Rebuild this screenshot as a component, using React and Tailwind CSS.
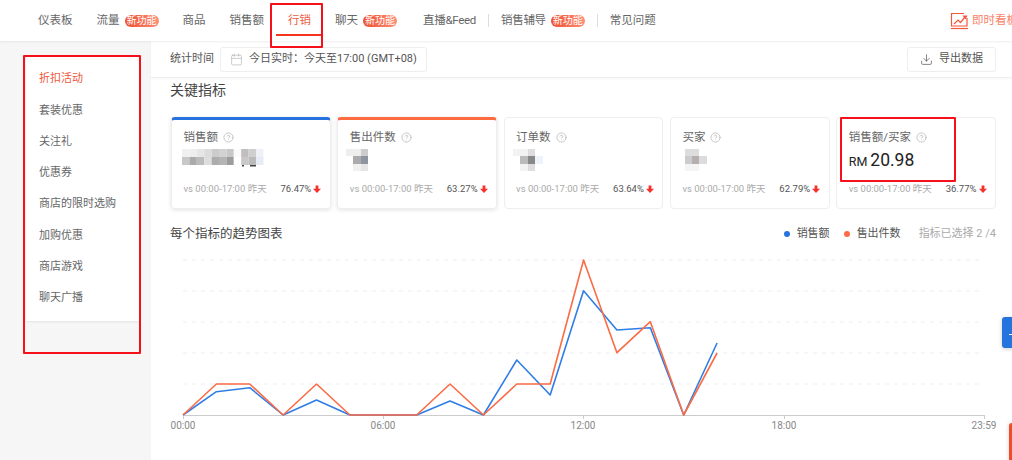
import { Calendar, CircleHelp, Download } from 'lucide-react';

const FONT = 'font-["Roboto","Noto_Sans_CJK_SC",sans-serif]';

const NAV = [
    { label: '仪表板' },
    { label: '流量', badge: true },
    { label: '商品' },
    { label: '销售额' },
    { label: '行销', active: true },
    { label: '聊天', badge: true },
    { label: '直播&Feed', divider: true, tight: true, shift: true },
    { label: '销售辅导', badge: true, divider: true, tight: true },
    { label: '常见问题' },
];

const SIDE = ['折扣活动', '套装优惠', '关注礼', '优惠券', '商店的限时选购', '加购优惠', '商店游戏', '聊天广播'];

const row1 = ['#f0f0f0', '#eeeeee', '#e6e6e6', '#dcdcdc', '#cccccc', '#d2d2d2', '#c8c8c8', '#fafafa', '#c2bebe', '#cfcfcf', '#eef1f6'];
const row2 = ['#c8c8c8', '#ababab', '#bcbcbc', '#dedede', '#adadad', '#b4b4b4', '#9c9c9c', '#ffffff', '#c8c8c8', '#bbbbbb', '#e6ebf5'];

// pixelated values: [x, y, w, h, colour]
const MOSAICS = [
    [
        ...row1.map((c, i) => [i * 7.4, 0, 7.4, 8, c]),
        ...row2.map((c, i) => [i * 7.4, 8, 7.4, 8, c]),
        [60, 16, 2, 1.5, '#444'], [68, 16, 6, 1.5, '#444'],
    ],
    [
        [7, 0, 15, 7, '#eeeeee'], [22, 0, 7, 7, '#cdcdcd'],
        [14, 7, 8, 8, '#ababab'], [22, 7, 7, 8, '#8f95a0'],
        [14, 15, 8, 7, '#f0f0f0'], [22, 15, 7, 7, '#e5e5e5'],
    ],
    [
        [7, 0, 15, 7, '#f3f3f3'], [22, 0, 7, 7, '#dddddd'],
        [14, 7, 8, 8, '#bbbbbb'], [22, 7, 7, 8, '#888888'], [29, 7, 8, 8, '#eef2fa'],
        [14, 15, 8, 7, '#f3f3f3'], [22, 15, 7, 7, '#dddddd'],
    ],
    [
        [13, 0, 14, 7, '#dddddd'],
        [13, 7, 7, 8, '#cccccc'], [20, 7, 7, 8, '#b5b0ae'], [27, 7, 8, 8, '#dcdce0'],
        [13, 15, 14, 7, '#f4f4f4'],
    ],
];

const CARDS = [
    { title: '销售额', pct: '76.47%', top: 'border-t-[#2673dd]', mosaic: 0 },
    { title: '售出件数', pct: '63.27%', top: 'border-t-[#ff6b40]', mosaic: 1 },
    { title: '订单数', pct: '63.64%', mosaic: 2 },
    { title: '买家', pct: '62.79%', mosaic: 3 },
    { title: '销售额/买家', pct: '36.77%', value: '20.98' },
];

const hourX = (h) => 183 + h * 33.38;
const BLUE = [415, 391.7, 387.7, 415, 400, 415, 415, 415, 401, 415, 360, 395, 290.7, 330, 327.7, 415, 343];
const ORANGE = [415, 384, 384, 415, 384, 415, 415, 415, 384, 415, 384, 384, 260, 352.7, 321.7, 415, 353];
const toPoints = (list) => list.map((y, h) => `${hourX(h)},${y}`).join(' ');

function Badge() {
    return (
        <span className="ml-[5px] flex h-[12px] w-[34px] items-center justify-center rounded-full bg-gradient-to-r from-[#ee4d2d] to-[#ff8f75] text-[10px] leading-none text-white">
            新功能
        </span>
    );
}

function Mosaic({ cells, wide }) {
    return (
        <svg width={wide ? 84 : 40} height="24" className={`mt-[2px] blur-[0.6px] ${wide ? '-ml-[1.5px]' : '-ml-[10.5px]'}`}>
            {cells.map(([x, y, w, h, c], i) => (
                <rect key={i} x={x} y={y} width={w} height={h} fill={c} />
            ))}
        </svg>
    );
}

function DownArrow() {
    return (
        <svg width="8" height="8" viewBox="0 0 8 8" className="ml-[2px]">
            <path d="M2.6 0.5h2.8v3.2H8L4 8 0 3.7h2.6z" fill="#f6302a" />
        </svg>
    );
}

function Card({ card }) {
    return (
        <div
            className={`h-[92px] rounded-[4px] border border-[#eeeeee] pl-[11.5px] pr-[8.5px] ${
                card.top ? `border-t-[3px] pt-[8px] shadow-[0_1px_4px_rgba(0,0,0,0.12)] ${card.top}` : 'pt-[10px]'
            }`}
        >
            <div className="flex h-[19px] items-center text-[11.5px] text-[#666666]">
                {card.title}
                <CircleHelp size={11} strokeWidth={1.4} className="ml-[5px] text-[#aaaaaa]" />
            </div>
            <div className="flex h-[24px] items-start">
                {card.value ? (
                    <div className="mt-[2px] flex items-baseline text-[#222222]">
                        <span className="text-[12.5px]">RM</span>
                        <span className="ml-[3px] text-[17.5px] leading-[22px]">{card.value}</span>
                    </div>
                ) : (
                    <Mosaic cells={MOSAICS[card.mosaic]} wide={card.mosaic === 0} />
                )}
            </div>
            <div className="mt-[10px] flex items-center justify-between">
                <span className="text-[9.5px] text-[#aaaaaa]">vs 00:00-17:00 昨天</span>
                <span className="mt-[1px] flex items-center text-[9.5px] text-[#555555]">
                    {card.pct}
                    <DownArrow />
                </span>
            </div>
        </div>
    );
}

function TrendChart() {
    return (
        <svg viewBox="171 250 825 190" width="825" height="190" className="mt-[7px] block overflow-visible">
            {[260, 291, 322, 353, 384].map((y) => (
                <line key={y} x1="183" x2="981" y1={y} y2={y} stroke="#eeeeee" strokeDasharray="4 5" />
            ))}
            <line x1="183" x2="984" y1="415.5" y2="415.5" stroke="#cccccc" />
            {[183, 383, 583, 784, 984].map((x) => (
                <line key={x} x1={x + 0.5} x2={x + 0.5} y1="415" y2="419" stroke="#cccccc" />
            ))}
            {[[183, '00:00'], [383, '06:00'], [583, '12:00'], [784, '18:00'], [984, '23:59']].map(([x, t]) => (
                <text key={t} x={x} y="429" textAnchor="middle" fontSize="10" fill="#888888">{t}</text>
            ))}
            <polyline points={toPoints(BLUE)} fill="none" stroke="#2f7ee6" strokeWidth="1.6" strokeLinejoin="round" />
            <polyline points={toPoints(ORANGE)} fill="none" stroke="#fb6b45" strokeWidth="1.6" strokeLinejoin="round" />
        </svg>
    );
}

export default function App() {
    return (
        <div className={`relative h-[460px] w-[1012px] overflow-hidden bg-white ${FONT}`}>
            {/* top nav */}
            <div className="relative z-10 flex h-[41px] items-center pl-[38px] text-[11.5px] text-[#666666] shadow-[0_1px_2px_rgba(0,0,0,0.07)]">
                {NAV.map((item) => (
                    <div key={item.label} className={`mr-[24px] flex items-center ${item.shift ? 'ml-[2px]' : ''}`}>
                        <span className={`relative ${item.active ? 'text-[#ee5a3c]' : ''} ${item.tight ? 'tracking-[-0.3px]' : ''}`}>
                            {item.label}
                            {item.active && (
                                <span className="absolute left-[-12px] right-[-11px] top-[22px] h-[2px] bg-[#f5331f]" />
                            )}
                        </span>
                        {item.badge && <Badge />}
                        {item.divider && <span className="ml-[12px] mr-[-12px] h-[13px] w-px bg-[#dddddd]" />}
                    </div>
                ))}
                <div className="ml-auto flex w-[62px] shrink-0 items-center text-[#f8836a]">
                    <svg width="19" height="18" viewBox="0 0 19 18" fill="none" stroke="#f0593a" strokeWidth="1.2" className="shrink-0">
                        <path d="M17 6v8H1.5V1.5H14" />
                        <path d="M1 16.5h17" />
                        <path d="M4 12l4-4 2.5 2.5L15 5" />
                        <path d="M12.5 3.5h5l-2 4z" fill="#f0593a" stroke="none" />
                    </svg>
                    <span className="ml-[3px] whitespace-nowrap">即时看板</span>
                </div>
            </div>

            <div className="flex h-[419px]">
                {/* side menu */}
                <div className="w-[151px] shrink-0 bg-[#f6f6f6] pl-[26px] pt-[14px]">
                    <div className="h-[266px] w-[113px] bg-white pl-[13px] pt-[9px] shadow-[0_1px_2px_rgba(0,0,0,0.08)]">
                        {SIDE.map((s, i) => (
                            <div
                                key={s}
                                className={`flex h-[31.25px] items-center whitespace-nowrap text-[11px] ${
                                    i === 0 ? 'text-[#ee5a3c]' : 'text-[#666666]'
                                }`}
                            >
                                {s}
                            </div>
                        ))}
                    </div>
                </div>

                <div className="min-w-0 flex-1">
                    {/* toolbar */}
                    <div className="flex h-[37px] items-center border-b border-[#eeeeee] pl-[19px] pr-[16px] shadow-[0_1px_2px_rgba(0,0,0,0.04)]">
                        <span className="text-[11px] text-[#555555]">统计时间</span>
                        <div className="ml-[6px] flex h-[25px] w-[207px] items-center rounded-[3px] border border-[#eeeeee] pl-[9px] text-[11px] text-[#555555]">
                            <Calendar size={13} strokeWidth={1.1} className="text-[#aaaaaa]" />
                            <span className="ml-[6px] whitespace-nowrap">今日实时：今天至17:00 (GMT+08)</span>
                        </div>
                        <div className="ml-auto flex h-[25px] w-[89px] items-center justify-center rounded-[3px] border border-[#eeeeee] text-[11px] text-[#555555]">
                            <Download size={13} strokeWidth={1.2} className="text-[#444444]" />
                            <span className="ml-[6px]">导出数据</span>
                        </div>
                    </div>

                    <div className="pl-[20px] pr-[16px]">
                        <div className="-ml-px mt-[2px] h-[37px] text-[14px] leading-[20px] text-[#444444]">关键指标</div>

                        <div className="grid grid-cols-5 gap-[6.5px]">
                            {CARDS.map((card) => (
                                <Card key={card.title} card={card} />
                            ))}
                        </div>

                        {/* chart header */}
                        <div className="mt-[16px] flex h-[18px] items-center">
                            <span className="-ml-px text-[12.5px] text-[#444444]">每个指标的趋势图表</span>
                            <div className="ml-auto flex items-center text-[11px] text-[#555555]">
                                <span className="h-[6px] w-[6px] rounded-full bg-[#2673dd]" />
                                <span className="ml-[7px]">销售额</span>
                                <span className="ml-[14px] h-[6px] w-[6px] rounded-full bg-[#fb6b45]" />
                                <span className="ml-[7px]">售出件数</span>
                                <span className="ml-[18px] text-[#aaaaaa]">指标已选择 2 /4</span>
                            </div>
                        </div>

                        <TrendChart />
                    </div>
                </div>
            </div>

            {/* floating tabs on the right edge */}
            <div className="absolute left-[1002px] top-[317px] z-20 h-[31px] w-[12px] rounded-l-[3px] bg-[#2673dd] shadow-[0_1px_4px_rgba(0,0,0,0.2)]">
                <span className="absolute left-[7px] top-[12px] h-[6px] w-[4px] border-b border-white" />
            </div>
            <div className="absolute left-[1009px] top-[423px] z-20 h-[40px] w-[5px] rounded-tl-[3px] bg-[#ee4d2d] shadow-[0_0_4px_rgba(0,0,0,0.2)]" />

            {/* red markup drawn over the screenshot */}
            <div className="absolute left-[270px] top-[3px] z-30 h-[45px] w-[53px] rounded-[1px] border-2 border-[#f5101c]" />
            <div className="absolute left-[23px] top-[55px] z-30 h-[299px] w-[118px] rounded-[1px] border-2 border-[#f5101c]" />
            <div className="absolute left-[840px] top-[117px] z-30 h-[65px] w-[116px] rounded-[1px] border-2 border-[#f5101c]" />
        </div>
    );
}
